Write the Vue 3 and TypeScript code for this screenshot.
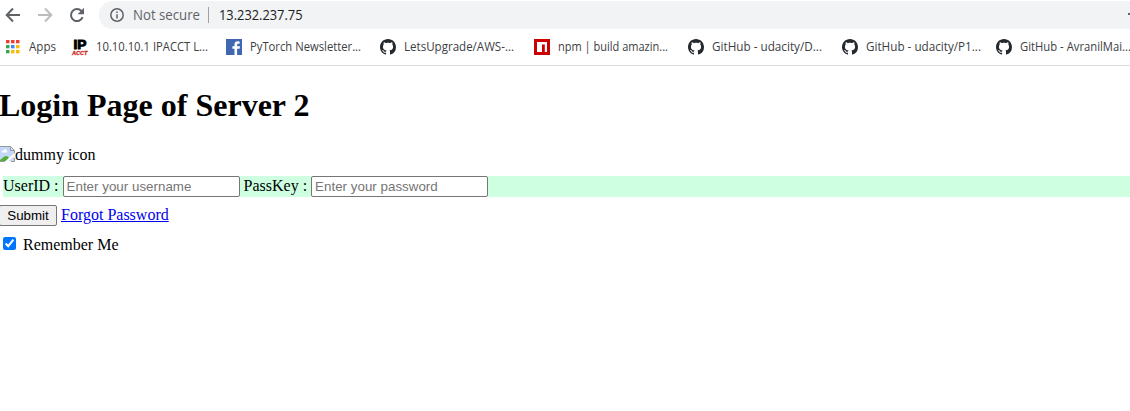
<script setup lang="ts">
import { ref } from 'vue'

type IconKind = 'apps' | 'ipacct' | 'facebook' | 'github' | 'npm'
interface Bookmark {
  icon: IconKind
  label: string
  width: number
}

const bookmarks: Bookmark[] = [
  { icon: 'apps', label: 'Apps', width: 27 },
  { icon: 'ipacct', label: '10.10.10.1 IPACCT L...', width: 112 },
  { icon: 'facebook', label: 'PyTorch Newsletter...', width: 111 },
  { icon: 'github', label: 'LetsUpgrade/AWS-...', width: 110 },
  { icon: 'npm', label: 'npm | build amazin...', width: 110 },
  { icon: 'github', label: 'GitHub - udacity/D...', width: 110 },
  { icon: 'github', label: 'GitHub - udacity/P1...', width: 115 },
  { icon: 'github', label: 'GitHub - AvranilMai...', width: 111 },
]

const appColors = ['#ea4335', '#ea4335', '#ea4335', '#34a853', '#4285f4', '#fbbc05', '#34a853', '#fbbc05', '#fbbc05']
const username = ref('')
const password = ref('')
const remember = ref(true)
</script>

<template>
  <div class="window">
    <header class="toolbar">
      <svg class="nav back" viewBox="0 0 16 16"><path d="M15 8H2M8 1.5 1.7 8 8 14.5" /></svg>
      <svg class="nav forward" viewBox="0 0 16 16"><path d="M1 8h13M8 1.5 14.3 8 8 14.5" /></svg>
      <svg class="nav reload" viewBox="0 0 16 16">
        <path d="M13.6 10.2A6 6 0 1 1 12.4 4L14 5.6" />
        <path class="solid" d="M15 .8v6.4H8.6z" />
      </svg>
      <div class="omnibox">
        <svg class="info" viewBox="0 0 14 14">
          <circle cx="7" cy="7" r="6.2" />
          <path d="M7 6.2v4.2M7 3.5v1.4" />
        </svg>
        <svg class="insecure" width="68" height="20"><text x="0" y="15" textLength="67" lengthAdjust="spacingAndGlyphs">Not secure</text></svg>
        <span class="divider"></span>
        <svg class="address" width="86" height="20"><text x="0" y="15" textLength="83.5" lengthAdjust="spacingAndGlyphs">13.232.237.75</text></svg>
        <span class="caret"></span>
      </div>
    </header>

    <nav class="bookmarks">
      <a v-for="(b, i) in bookmarks" :key="i" class="bookmark">
        <svg v-if="b.icon === 'apps'" class="favicon apps" viewBox="0 0 14 14">
          <rect v-for="(c, n) in appColors" :key="n" :x="(n % 3) * 5" :y="Math.floor(n / 3) * 5" width="3.5" height="3.3" :fill="c" />
        </svg>
        <svg v-else-if="b.icon === 'ipacct'" class="favicon" viewBox="0 0 16 16">
          <text class="ip" x="1.5" y="10" textLength="13" lengthAdjust="spacingAndGlyphs">IP</text>
          <text class="acct" x="0" y="15.6" textLength="15.5" lengthAdjust="spacingAndGlyphs">ACCT</text>
        </svg>
        <svg v-else-if="b.icon === 'facebook'" class="favicon" viewBox="0 0 16 16">
          <path fill="#4267b2" d="M0 0h16v16H0z" />
          <path fill="#fff" d="M8.5 16V9.7H6.4V7.2h2.1V5.4c0-2 1.2-3.1 3.1-3.1l2 .1v2.3h-1.3c-1 0-1.2.5-1.2 1.2v1.3h2.9l-.4 2.5h-2.5V16z" />
        </svg>
        <svg v-else-if="b.icon === 'npm'" class="favicon" viewBox="0 0 16 16">
          <path fill="#cb0000" d="M0 0h16v16H0z" />
          <path fill="#fff" d="M3 3h10v10h-2.2V5.4H8V13H3z" />
        </svg>
        <svg v-else class="favicon" viewBox="0 0 16 16">
          <path fill="#24292e" d="M8 0C3.58 0 0 3.58 0 8c0 3.54 2.29 6.53 5.47 7.59.4.07.55-.17.55-.38 0-.19-.01-.82-.01-1.49-2.01.37-2.53-.49-2.69-.94-.09-.23-.48-.94-.82-1.13-.28-.15-.68-.52-.01-.53.63-.01 1.08.58 1.23.82.72 1.21 1.87.87 2.33.66.07-.52.28-.87.51-1.07-1.78-.2-3.64-.89-3.64-3.95 0-.87.31-1.59.82-2.15-.08-.2-.36-1.02.08-2.12 0 0 .67-.21 2.2.82.64-.18 1.32-.27 2-.27s1.36.09 2 .27c1.53-1.04 2.2-.82 2.2-.82.44 1.1.16 1.92.08 2.12.51.56.82 1.27.82 2.15 0 3.07-1.87 3.75-3.65 3.95.29.25.54.73.54 1.48 0 1.07-.01 1.93-.01 2.2 0 .21.15.46.55.38A8.01 8.01 0 0 0 16 8c0-4.42-3.58-8-8-8z" />
        </svg>
        <svg class="label" :width="b.width + 2" height="18">
          <text x="0" y="13" :textLength="b.width" lengthAdjust="spacingAndGlyphs">{{ b.label }}</text>
        </svg>
      </a>
    </nav>

    <main class="page">
      <h1>Login Page of Server 2</h1>
      <div class="image-line">
        <svg class="broken" viewBox="0 0 16 16">
          <path fill="#c3d7f7" d="M0 1h10l4 4v10H0z" />
          <path fill="#fff" d="M1.5 6.5c0-1.5 1-2 2-2 1-2 3-1 3 0 1 0 1 2 0 2z" />
          <path fill="#55ad3c" d="M0 14c2-1 4-4.5 7-4l2 2-3 3H0z" />
          <path fill="none" stroke="#9a9a9a" d="M0 .5h10.5l4 4V8M10.5.5v4h4M0 15.5h5M11 15.5h3.5V12" />
          <path stroke="#fff" stroke-width="2" d="m6 16 9-8" />
        </svg><span>dummy icon</span>
      </div>
      <form class="credentials" @submit.prevent>
        <label for="user">UserID :</label>
        <input id="user" v-model="username" class="field" type="text" placeholder="Enter your username" />
        <label for="pass" class="pass">PassKey :</label>
        <input id="pass" v-model="password" class="field" type="password" placeholder="Enter your password" />
      </form>
      <div class="actions">
        <button type="button">Submit</button>
        <a class="forgot" href="#">Forgot Password</a>
      </div>
      <label class="remember">
        <input v-model="remember" type="checkbox" />
        <span>Remember Me</span>
      </label>
    </main>
  </div>
</template>

<style>
body {
  background: #fff;
  overflow: hidden;
}
</style>

<style scoped>
.window {
  width: 1130px;
  height: 411px;
  overflow: hidden;
  background: #fff;
}
svg { overflow: visible; }
.toolbar {
  display: flex;
  align-items: center;
  height: 28px;
  padding-top: 1px;
}
.nav {
  flex: none;
  width: 16px;
  height: 16px;
  fill: none;
  stroke: #5f6368;
  stroke-width: 2;
}
.back { margin-left: 5px; }
.forward { margin-left: 16px; stroke: #bbbdbf; }
.reload { margin-left: 16px; }
.nav .solid { fill: #5f6368; stroke: none; }
.omnibox {
  display: flex;
  flex: 1;
  align-items: center;
  height: 28px;
  margin-left: 14px;
  padding-left: 11px;
  border-radius: 14px 0 0 14px;
  background: #f1f3f4;
  font: 14px "Open Sans", sans-serif;
}
.info {
  width: 14px;
  height: 14px;
  fill: none;
  stroke: #5f6368;
  stroke-width: 1.5;
}
.insecure { margin-left: 9px; fill: #5f6368; }
.divider { width: 1px; height: 16px; margin-left: 7px; background: #9aa0a6; }
.address { margin-left: 9.5px; fill: #202124; }
.caret {
  width: 2px;
  height: 2px;
  margin: 0 0 2px auto;
  background: #5f6368;
}
.bookmarks {
  display: grid;
  grid-template-columns: 68px repeat(7, 154px);
  height: 36px;
  padding-left: 4px;
  border-bottom: 1px solid #dadce0;
}
.bookmark { display: flex; align-items: center; }
.favicon { flex: none; width: 16px; height: 16px; margin-right: 8px; }
.favicon.apps { width: 14px; height: 14px; margin: 0 9px 0 2px; }
.label {
  flex: none;
  font: 12px "Open Sans", sans-serif;
  fill: #3c4043;
}
.ip { font: 900 13.5px "Liberation Sans", sans-serif; stroke: #000; stroke-width: 1; }
.acct { font: italic bold 6px "Liberation Sans", sans-serif; fill: #d21e1e; stroke: #d21e1e; stroke-width: .3; }
.page { font: 16px/18px "Liberation Serif", serif; color: #000; }
h1 { margin: 21px 0 0 -1px; font-size: 32px; line-height: 37px; }
.image-line { display: flex; height: 20px; margin-top: 22px; }
.image-line span { margin-left: -1px; }
.broken { flex: none; width: 16px; height: 16px; }
.credentials {
  display: flex;
  align-items: center;
  height: 21px;
  margin: 10px 0 0 3px;
  background: #ceffe0;
}
.credentials label { margin-top: -2px; }
.field {
  box-sizing: border-box;
  width: 177px;
  height: 21px;
  margin: 0 0 0 4px;
  padding: 1px 2px 1px 3px;
  border: 1px solid #767676;
  border-radius: 2px;
  background: #fff;
  font: 13.333px "Liberation Sans", sans-serif;
}
.field::placeholder { color: #757575; letter-spacing: .02px; }
.credentials .pass { margin-left: 4px; }
.actions { display: flex; align-items: center; height: 21px; margin-top: 8px; }
button {
  box-sizing: border-box;
  width: 58px;
  height: 21px;
  margin: 0 0 0 -1px;
  padding: 0;
  border: 1px solid #767676;
  border-radius: 2px;
  background: #efefef;
  color: #000;
  font: 13.333px "Liberation Sans", sans-serif;
}
.forgot { margin: -2px 0 0 4px; color: #0000ee; }
.remember { display: flex; align-items: center; height: 18px; margin-top: 10px; }
.remember input { width: 13px; height: 13px; margin: -4px 7px 0 3px; }
</style>
